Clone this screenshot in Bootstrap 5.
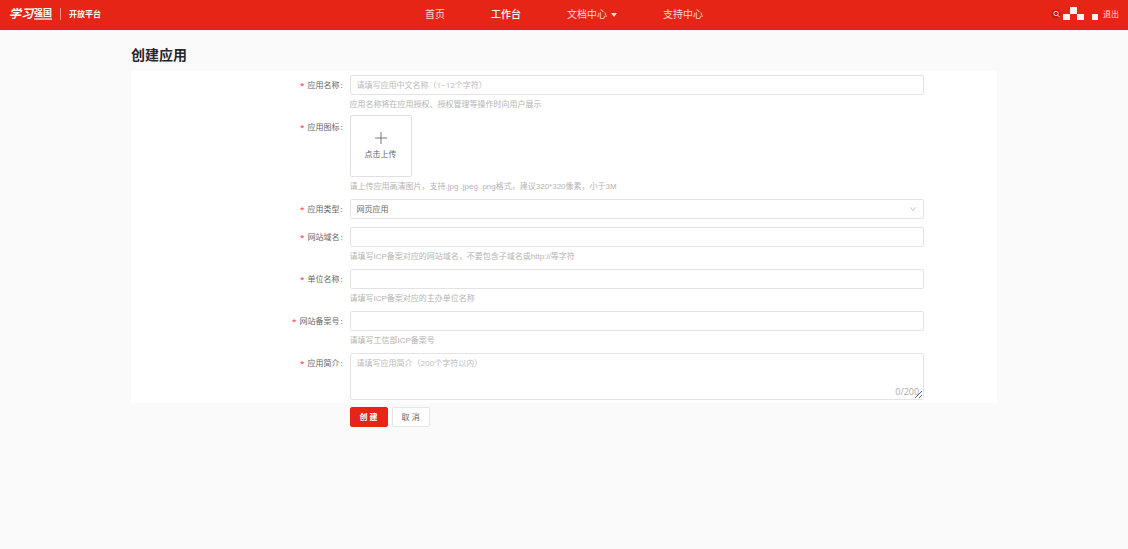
<!DOCTYPE html>
<html lang="zh-CN">
<head>
<meta charset="utf-8">
<meta name="viewport" content="width=device-width, initial-scale=1">
<title>创建应用 - 开放平台</title>
<link href="https://cdn.jsdelivr.net/npm/bootstrap@5.3.0/dist/css/bootstrap.min.css" rel="stylesheet">
<style>
  body {
    background: #fafafa;
    color: #666;
    font: 8px/12px "Open Sans", "Noto Sans CJK SC", sans-serif;
  }
  a { color: inherit; text-decoration: none; }

  .top-bar { background: #e62517; color: #fff; height: 30px; padding: 0 9px 2px; }
  .top-side { flex: 1 1 0; }
  .brand-link { gap: 1px; }
  .brand-script { font-size: 12px; font-style: italic; font-weight: 700; line-height: 20px; }
  .brand-name { font-size: 9px; font-weight: 700; line-height: 10px; }
  .brand-rule { height: 2px; background: #f7aaa4; }
  .brand-split { width: 1px; height: 12px; background: #f4948c; margin: 0 8px; }
  .main-nav { gap: 46px; font-size: 10px; line-height: 16px; color: #ffd9d5; }
  .main-nav .active { color: #fff; font-weight: 500; }
  .main-nav .dropdown-toggle::after { border-width: 4px 3px 0; margin-left: 4px; vertical-align: 1px; }
  .leave { color: #ffd9d5; }

  .page-wrap { max-width: 866px; }
  .page-title { font-size: 14px; line-height: 20px; font-weight: 700; color: #26262b; margin: 15px 0 6px; }
  .panel { background: #fff; border-radius: 2px; padding: 4px 1px 3px 3px; }

  .field { margin-bottom: 4px; }
  .field-tight { margin-bottom: 2px; }
  .field-loose { margin-bottom: 8px; }
  .field-name { line-height: 20px; padding-right: 7px; text-align: right; }
  .field-name::before { content: "*"; color: #f5222d; margin-right: 3px; }
  .field-name::after { content: ":"; margin-left: 1px; }
  .field-name-upload { padding-top: 2px; }
  .hint { color: #b4b4b4; line-height: 16px; padding-top: 2px; font-family: "Liberation Sans", "Noto Sans CJK SC", sans-serif; }

  .form-control, .form-select {
    font-size: 8px; line-height: 12px; min-height: 20px;
    padding: 3px 6px; color: #666; background-color: #fff;
    border: 1px solid #e3e3e3; border-radius: 2px;
  }
  .form-control::placeholder { color: #bbb; }
  .form-select {
    background-size: 6px 6px; background-position: right 7px center;
    background-image: url("data:image/svg+xml,%3Csvg xmlns='http://www.w3.org/2000/svg' viewBox='0 0 14 14'%3E%3Cpath d='M1 3l6 8 6-8' fill='none' stroke='%23bbb' stroke-width='2'/%3E%3C/svg%3E");
  }
  textarea.form-control { height: 47px; min-height: 47px; display: block; }
  .counter { right: 5px; bottom: 2px; color: #aaa; font-size: 9px; pointer-events: none; }

  .upload { width: 62px; height: 62px; background: #fff; border: 1px solid #e0e0e0; border-radius: 2px; color: #666; gap: 4px; }

  .btn { --bs-btn-font-size: 8px; --bs-btn-line-height: 12px; --bs-btn-padding-x: 9px; --bs-btn-padding-y: 3px; --bs-btn-border-radius: 2px; }
  .btn-create { --bs-btn-color: #fff; --bs-btn-bg: #e62517; --bs-btn-border-color: #e62517; --bs-btn-hover-color: #fff; --bs-btn-hover-bg: #c81e12; font-weight: 700; }
  .btn-cancel { --bs-btn-color: #666; --bs-btn-bg: #fff; --bs-btn-border-color: #e6e6e6; --bs-btn-hover-bg: #f5f5f5; }
  .actions { margin-top: 4px; padding: 0 1px 0 3px; }
  .actions .btn { min-width: 38px; }
</style>
</head>
<body>
<header class="top-bar d-flex align-items-center">
  <div class="top-side d-flex align-items-center">
    <a href="#" class="brand-link d-flex align-items-center">
      <span class="brand-script">学习</span>
      <span><span class="brand-name d-block">强国</span><span class="brand-rule d-block"></span></span>
    </a>
    <span class="brand-split"></span>
    <a href="#" class="fw-bold">开放平台</a>
  </div>
  <nav class="main-nav d-flex">
    <a href="#">首页</a>
    <a href="#" class="active">工作台</a>
    <a href="#" class="dropdown-toggle" data-bs-toggle="dropdown">文档中心</a>
    <a href="#">支持中心</a>
  </nav>
  <div class="top-side d-flex align-items-center justify-content-end">
    <svg width="48" height="14" viewBox="0 0 48 14" aria-hidden="true">
      <circle cx="5" cy="7" r="4.5" fill="#c01d12"/>
      <circle cx="5" cy="6.5" r="2.2" fill="none" stroke="#ffd5d1"/>
      <path d="M6.7 8.2l2 2" stroke="#ffd5d1"/>
      <path d="M12 7h7v6h-7zM19 0h7v7h-7zM26 7h7v6h-7zM41 7h6v6h-6z" fill="#fff3f2"/>
    </svg>
    <a href="#" class="leave ms-1">退出</a>
  </div>
</header>

<main class="page-wrap mx-auto">
  <h1 class="page-title">创建应用</h1>
  <form>
    <div class="panel">
      <div class="row g-0 field field-tight">
        <label class="col-3 field-name" for="appName">应用名称</label>
        <div class="col-8">
          <input class="form-control" id="appName" type="text" placeholder="请填写应用中文名称（1~12个字符）">
          <div class="hint">应用名称将在应用授权、授权管理等操作时向用户展示</div>
        </div>
      </div>
      <div class="row g-0 field">
        <label class="col-3 field-name field-name-upload" for="appIcon">应用图标</label>
        <div class="col-8">
          <button class="upload d-flex flex-column align-items-center justify-content-center p-0" id="appIcon" type="button">
            <svg width="12" height="12" viewBox="0 0 12 12" aria-hidden="true"><path d="M6 0v12M0 6h12" stroke="#777"/></svg>
            <span>点击上传</span>
          </button>
          <div class="hint">请上传应用高清图片，支持.jpg .jpeg .png格式，建议320*320像素，小于3M</div>
        </div>
      </div>
      <div class="row g-0 field field-loose">
        <label class="col-3 field-name" for="appType">应用类型</label>
        <div class="col-8">
          <select class="form-select" id="appType"><option>网页应用</option></select>
        </div>
      </div>
      <div class="row g-0 field">
        <label class="col-3 field-name" for="domain">网站域名</label>
        <div class="col-8">
          <input class="form-control" id="domain" type="text">
          <div class="hint">请填写ICP备案对应的网站域名，不要包含子域名或http://等字符</div>
        </div>
      </div>
      <div class="row g-0 field">
        <label class="col-3 field-name" for="company">单位名称</label>
        <div class="col-8">
          <input class="form-control" id="company" type="text">
          <div class="hint">请填写ICP备案对应的主办单位名称</div>
        </div>
      </div>
      <div class="row g-0 field">
        <label class="col-3 field-name" for="record">网站备案号</label>
        <div class="col-8">
          <input class="form-control" id="record" type="text">
          <div class="hint">请填写工信部ICP备案号</div>
        </div>
      </div>
      <div class="row g-0">
        <label class="col-3 field-name" for="intro">应用简介</label>
        <div class="col-8 position-relative">
          <textarea class="form-control" id="intro" maxlength="200" placeholder="请填写应用简介（200个字符以内）"></textarea>
          <span class="counter position-absolute">0/200</span>
        </div>
      </div>
    </div>
    <div class="actions">
      <div class="row g-0">
        <div class="col-8 offset-3 d-flex gap-1">
          <button type="submit" class="btn btn-create">创 建</button>
          <button type="button" class="btn btn-cancel">取 消</button>
        </div>
      </div>
    </div>
  </form>
</main>
<script src="https://cdn.jsdelivr.net/npm/bootstrap@5.3.0/dist/js/bootstrap.bundle.min.js"></script>
</body>
</html>
